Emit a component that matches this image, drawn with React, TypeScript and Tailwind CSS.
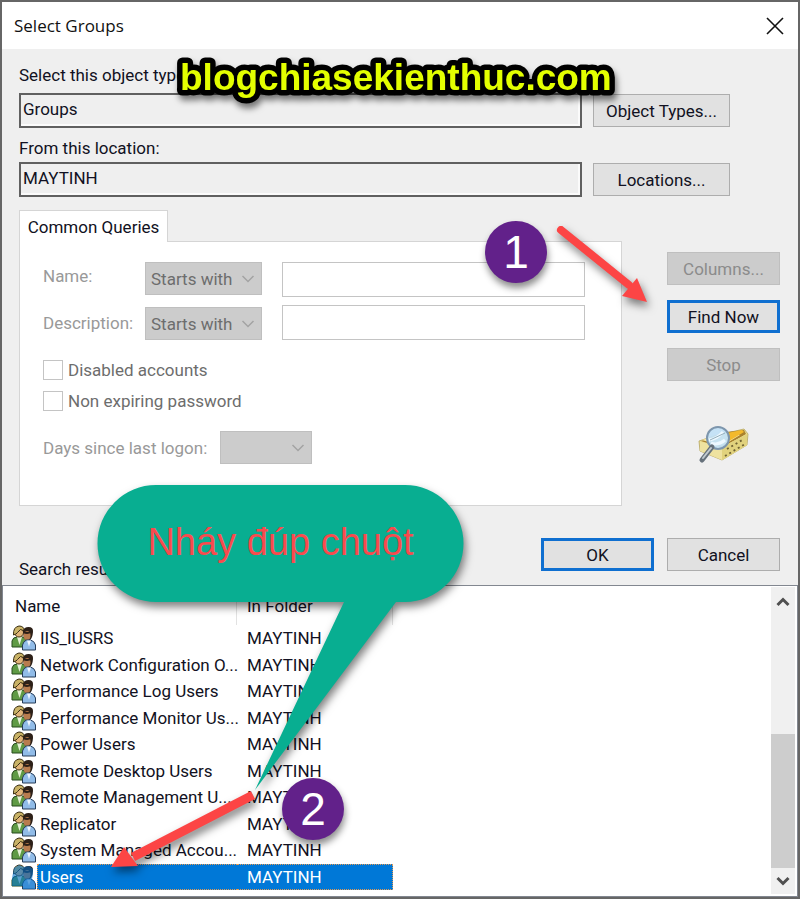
import type { ReactNode } from "react";

const groups = [
  "IIS_IUSRS",
  "Network Configuration O...",
  "Performance Log Users",
  "Performance Monitor Us...",
  "Power Users",
  "Remote Desktop Users",
  "Remote Management U...",
  "Replicator",
  "System Managed Accou...",
  "Users",
];

function Chevron({ up = false, bold = false }: { up?: boolean; bold?: boolean }) {
  return (
    <svg width="14" height="14" viewBox="0 0 14 14" fill="none" stroke="currentColor" strokeWidth={bold ? 3 : 1.5}>
      <path d={up ? "M1.5 10 7 4.5 12.5 10" : "M1.5 4 7 9.5 12.5 4"} />
    </svg>
  );
}

function PushButton({ children, kind = "normal", wide = false }: { children: ReactNode; kind?: "normal" | "focus" | "off"; wide?: boolean }) {
  const look = {
    normal: "border border-[#adadad] bg-[#e1e1e1] text-[#111122]",
    focus: "border-3 border-[#0f6fd0] bg-[#e1e1e1] text-[#111122]",
    off: "border border-[#bfbfbf] bg-[#cccccc] text-[#8b8b8b]",
  }[kind];
  return (
    <button disabled={kind === "off"} className={`flex h-[33px] shrink-0 items-center justify-center pt-px ${wide ? "w-[137px]" : "w-[113px]"} ${look}`}>
      {children}
    </button>
  );
}

function DropDown({ id, value, width }: { id: string; value: string; width: string }) {
  return (
    <div className={`relative shrink-0 ${width}`}>
      <select id={id} disabled defaultValue={value} className="h-[33px] w-full appearance-none border border-[#bfbfbf] bg-[#cccccc] pl-[5px] text-[#6d6d6d] opacity-100">
        <option>{value}</option>
      </select>
      <span className="pointer-events-none absolute top-[10px] right-[7px] text-[#a3a3a3]">
        <Chevron />
      </span>
    </div>
  );
}

function LocationField({ id, label, value, action, gap }: { id: string; label: string; value: string; action: string; gap: string }) {
  return (
    <div className={`flex flex-col ${gap}`}>
      <label htmlFor={id} className="leading-5">{label}</label>
      <div className="flex items-center gap-[11px]">
        <input id={id} readOnly defaultValue={value} className="h-[35px] min-w-0 flex-1 border-2 border-[#606060] bg-[#efefef] pb-1 pl-[2px] shadow-[inset_-2px_-2px_0_#fbfbfb]" />
        <PushButton wide>{action}</PushButton>
      </div>
    </div>
  );
}

function GroupIcon({ selected }: { selected: boolean }) {
  return (
    <svg width="25" height="26" viewBox="0 0 25 26" className="block">
      <path d="M1 22V16q1-4 5-4h6q3 1 3 4v6z" fill="#5f9a45" stroke="#274a1c" />
      <path d="m6 12 2.500 8L11 12z" fill="#e5f0d5" />
      <circle cx="8" cy="7.500" r="4.500" fill="#e0b478" stroke="#4b3618" />
      <path d="M2.500 10q-.500-8 5.500-9 5 0 5.500 5l-4-1.500Q6 8 5 9z" fill="#c9b266" stroke="#3a2e12" />
      <path d="M12 6q1-4 5.500-4 5 0 4.500 5-.5 6-3 8l-6-1z" fill="#2d2018" />
      <ellipse cx="16" cy="10.500" rx="3.500" ry="4.500" fill="#b87c4e" />
      <path d="M12.500 7q4 2 8-.5" stroke="#2d2018" strokeWidth="2" fill="none" />
      <path d="M11.500 25v-5q1-4 4-5h4q4 1 5 5v5z" fill="#91bce8" stroke="#263c59" />
      <path d="m16 15.500 2 6 2-6z" fill="#eef6ff" />
      {selected && <path d="M1 22V14L3 4 8 1l5 2 5-1 4 3v5l-1 5 3 3v7H12v-3z" fill="#0070cc" opacity=".6" />}
    </svg>
  );
}

function DirectorySearchIcon() {
  return (
    <svg width="52" height="40" viewBox="0 0 52 40" fill="none">
      <path d="m1 16 15-5 30-7 4 5-1 11-25 15-22-9z" fill="#eadd94" stroke="#b5a45d" strokeWidth=".8" />
      <path d="m3 16 25-9 18-2 2 4-23 14z" fill="#a9812e" />
      <path d="m4 15 23-7 15 2-18 11z" fill="#f7e9a8" />
      <path d="m29 8 15-3 2 2-15 9z" fill="#f3b92c" />
      <path d="m2 17 22 5 25-13v11L24 35 2 26z" fill="#eee2a0" />
      <path d="m24 22 25-13v11L24 35z" fill="#e1d27d" />
      <path d="m27 31 20-12M29 24l17-10" stroke="#6f6234" strokeWidth="1.800" strokeDasharray="2 3" />
      <circle cx="20" cy="13" r="11" fill="#c1e1f6" fillOpacity=".92" stroke="#7d96ad" strokeWidth="2" />
      <path d="M11 15q8-1 14-8M13 18q7 3 14-3" stroke="#edf8ff" strokeWidth="3" />
      <path d="m12 15 15-7" stroke="#93aebb" />
      <path d="m14 22-10 13" stroke="#66717b" strokeWidth="5" strokeLinecap="round" />
      <path d="m13 23-8 10" stroke="#c2cbd1" strokeWidth="2" strokeLinecap="round" />
    </svg>
  );
}

function StepBadge({ n, place }: { n: number; place: string }) {
  return (
    <div className={`absolute flex size-[62px] items-center justify-center rounded-full bg-[#62218a] text-[46px] leading-none text-white shadow-[1px_5px_7px_rgba(0,0,0,0.45)] ${place}`}>
      {n}
    </div>
  );
}

function Annotations() {
  return (
    <div className="pointer-events-none absolute inset-0 font-['Liberation_Sans',Arial,sans-serif]">
      <svg width="480" height="70" className="absolute top-[46px] left-[165px] drop-shadow-[2px_5px_3px_rgba(0,0,0,0.5)]">
        <text x="13" y="42" fontSize="37" fontWeight="700" fill="#e3ff00" stroke="#000000" strokeWidth="11" strokeLinejoin="round" paintOrder="stroke">
          blogchiasekienthuc.com
        </text>
      </svg>
      <svg width="800" height="899" className="absolute -top-[2px] -left-[2px] drop-shadow-[2px_5px_4px_rgba(0,0,0,0.5)]">
        <path d="M156 485H405a58.500 58.500 0 0 1 0 117h-9L255 790 344 602H156a58.500 58.500 0 0 1 0-117z" fill="#08ae91" />
        <path d="M561 230 629 285" stroke="#fc4545" strokeWidth="8" strokeLinecap="round" />
        <path d="m637 278 10 24-25-6z" fill="#fc4545" />
        <path d="M253 795 133 857" stroke="#fc4545" strokeWidth="9" />
        <path d="m124 847-13 20 27-1z" fill="#fc4545" />
      </svg>
      <div className="absolute top-[483px] left-[95px] flex h-[117px] w-[367px] items-center justify-center pb-1 text-[38px] whitespace-nowrap text-[#f94a4d]">
        Nháy đúp chuột
      </div>
      <StepBadge n={1} place="top-[219px] left-[483px]" />
      <StepBadge n={2} place="top-[776px] left-[280px]" />
    </div>
  );
}

export default function App() {
  return (
    <main className="relative flex min-h-screen w-full flex-col overflow-hidden border-2 border-[#666666] bg-[#efefef] font-[Roboto,'Liberation_Sans',Arial,sans-serif] text-[17px] leading-5 text-[#111122]">
      <header className="flex h-[47px] items-center justify-between bg-white pr-[14px] pl-3">
        <h1 className="font-['Open_Sans',sans-serif] text-[17px] text-[#111111]">Select Groups</h1>
        <button aria-label="Close" className="text-[#111111]">
          <svg width="18" height="18" viewBox="0 0 18 18" stroke="currentColor" strokeWidth="1.600">
            <path d="m1 1 16 16M17 1 1 17" />
          </svg>
        </button>
      </header>

      <section className="flex flex-col gap-[10px] pt-4 pr-[68px] pl-[17px]">
        <LocationField id="types" label="Select this object type:" value="Groups" action="Object Types..." gap="gap-2" />
        <LocationField id="location" label="From this location:" value="MAYTINH" action="Locations..." gap="gap-1" />
      </section>

      <section className="mt-[13px] flex gap-[45px] pr-[18px] pl-[17px]">
        <div className="flex min-w-0 flex-1 flex-col">
          <button className="relative z-10 -mb-px h-8 w-[149px] border border-b-0 border-[#d5d5d5] bg-white text-center">Common Queries</button>
          <div className="flex h-[265px] flex-col border border-[#d5d5d5] bg-white pt-5 pr-9 pl-[23px] text-[#6d6d6d]">
            <div className="flex items-start">
              <label htmlFor="name-match" className="w-[102px] shrink-0 pt-1 text-[#999999]">Name:</label>
              <DropDown id="name-match" value="Starts with" width="w-[117px]" />
              <input aria-label="Name" disabled className="ml-5 h-[35px] min-w-0 flex-1 border border-[#c4c4c4] bg-white" />
            </div>
            <div className="mt-2 flex items-end">
              <label htmlFor="description-match" className="w-[102px] shrink-0 self-center text-[#999999]">Description:</label>
              <DropDown id="description-match" value="Starts with" width="w-[117px]" />
              <input aria-label="Description" disabled className="ml-5 h-[35px] min-w-0 flex-1 border border-[#c4c4c4] bg-white" />
            </div>
            <label className="mt-5 flex items-center gap-[5px]">
              <input type="checkbox" disabled className="size-5 appearance-none border border-[#c4c4c4] bg-white" />
              Disabled accounts
            </label>
            <label className="mt-[11px] flex items-center gap-[5px]">
              <input type="checkbox" disabled className="size-5 appearance-none border border-[#c4c4c4] bg-white" />
              Non expiring password
            </label>
            <div className="mt-5 flex items-center">
              <label htmlFor="days" className="w-[177px] shrink-0 text-[#999999]">Days since last logon:</label>
              <DropDown id="days" value="" width="w-[92px]" />
            </div>
          </div>
        </div>
        <div className="flex w-[113px] shrink-0 flex-col gap-[15px] pt-[42px]">
          <PushButton kind="off">Columns...</PushButton>
          <PushButton kind="focus">Find Now</PushButton>
          <PushButton kind="off">Stop</PushButton>
          <div className="mt-[29px] flex justify-center">
            <DirectorySearchIcon />
          </div>
        </div>
      </section>

      <section className="mt-8 flex h-[47px] items-start justify-between pr-[18px] pl-[17px]">
        <h2 className="self-end pb-[6px]">Search results:</h2>
        <div className="flex gap-[13px]">
          <PushButton kind="focus">OK</PushButton>
          <PushButton>Cancel</PushButton>
        </div>
      </section>

      <section className="flex flex-1 items-stretch justify-between border border-[#828790] bg-white pt-px pr-[2px] pb-[2px]">
        <table className="h-[303px] w-[390px] table-fixed border-separate border-spacing-0 text-left">
          <colgroup>
            <col className="w-[34px]" />
            <col className="w-[200px]" />
            <col className="w-[156px]" />
          </colgroup>
          <thead>
            <tr className="h-[38px]">
              <th colSpan={2} className="border-r border-[#e2e2e2] pl-3 font-normal">Name</th>
              <th className="border-r border-[#e2e2e2] pl-[10px] font-normal">In Folder</th>
            </tr>
          </thead>
          <tbody>
            {groups.map((name) => {
              const selected = name === "Users";
              return (
                <tr key={name} className={selected ? "text-white" : ""}>
                  <td className="p-0 pl-2">
                    <GroupIcon selected={selected} />
                  </td>
                  <td className={`p-0 pl-[2px] whitespace-nowrap ${selected ? "border-y border-l border-dotted border-[#e39a55] bg-[#0078d7]" : "border-l border-transparent"}`}>{name}</td>
                  <td className={`p-0 pl-[10px] ${selected ? "border-y border-r border-dotted border-[#e39a55] bg-[#0078d7]" : ""}`}>MAYTINH</td>
                </tr>
              );
            })}
          </tbody>
        </table>
        <div className="flex w-6 shrink-0 flex-col items-center bg-[#f0f0f0] text-[#505050]">
          <button aria-label="Scroll up" className="flex h-[30px] items-center"><Chevron up bold /></button>
          <div className="flex w-full flex-1 flex-col justify-end">
            <div className="h-[134px] bg-[#cdcdcd]" />
          </div>
          <button aria-label="Scroll down" className="flex h-[26px] items-center"><Chevron bold /></button>
        </div>
      </section>
      <Annotations />
    </main>
  );
}
